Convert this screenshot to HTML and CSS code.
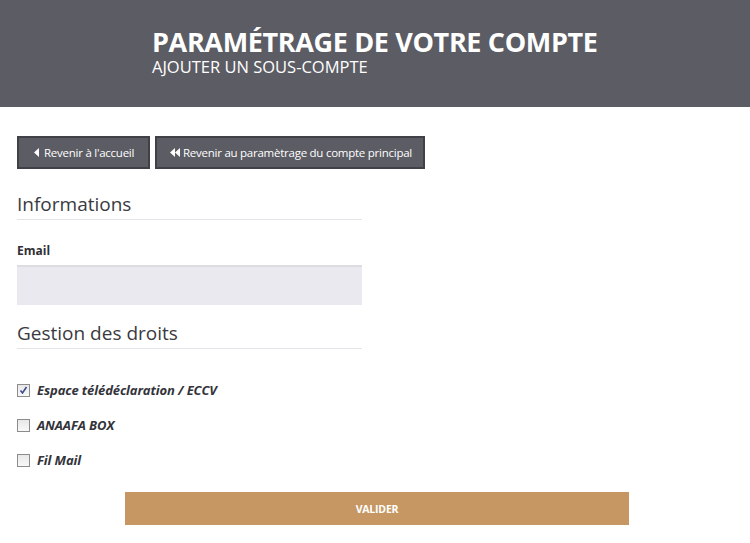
FILE: index.html
```html
<!DOCTYPE html>
<html lang="fr">
<head>
<meta charset="utf-8">
<link rel="stylesheet" href="styles.css">
</head>
<body>
<header class="hero">
  <div class="hero-inner">
    <h1 class="hero-title">PARAMÉTRAGE DE VOTRE COMPTE</h1>
    <p class="hero-sub">AJOUTER UN SOUS-COMPTE</p>
  </div>
</header>
<main class="content">
  <div class="actions">
    <a class="btn btn-home" href="#"><svg class="ico" width="5" height="9" viewBox="0 0 5 9"><path d="M5 0 L0 4.5 L5 9 Z" fill="#fff"/></svg>Revenir à l'accueil</a>
    <a class="btn btn-main" href="#"><svg class="ico" width="10" height="9" viewBox="0 0 10 9"><path d="M5 0 L0 4.5 L5 9 Z M10 0 L5 4.5 L10 9 Z" fill="#fff"/></svg>Revenir au paramètrage du compte principal</a>
  </div>
  <section class="block">
    <h2 class="section-title first">Informations</h2>
    <label class="field-label">Email</label>
    <div class="input"></div>
  </section>
  <section class="block">
    <h2 class="section-title second">Gestion des droits</h2>
    <ul class="rights">
      <li class="right"><span class="cb"><svg width="9" height="9" viewBox="0 0 9 9"><path d="M1.5 4.5 L3.5 7 L7.5 1" fill="none" stroke="#3d4b8e" stroke-width="1.6"/></svg></span>Espace télédéclaration / ECCV</li>
      <li class="right"><span class="cb"></span>ANAAFA BOX</li>
      <li class="right"><span class="cb"></span>Fil Mail</li>
    </ul>
  </section>
  <div class="submit-row">
    <button class="submit">VALIDER</button>
  </div>
</main>
</body>
</html>
```
FILE: styles.css
```css
* { box-sizing: border-box; }
body {
  margin: 0;
  font-family: "Open Sans", "Noto Sans", sans-serif;
  color: #333;
  background: #fff;
}
.hero {
  background: #5c5c64;
  height: 107px;
  padding: 27px 0 0 152px;
}
.hero-title {
  margin: 0;
  color: #fff;
  font-size: 27px;
  line-height: 30px;
  font-weight: 700;
  letter-spacing: -0.35px;
  white-space: nowrap;
}
.hero-sub {
  margin: 1px 0 0;
  color: #fff;
  font-size: 16.5px;
  line-height: 18px;
  white-space: nowrap;
}
.content {
  padding: 29px 17px 0;
}
.actions {
  display: flex;
  gap: 5px;
}
.btn {
  display: flex;
  align-items: center;
  gap: 5px;
  height: 33px;
  padding: 0 0 0 15px;
  background: #5c5c64;
  border: 2px solid #404047;
  color: #fff;
  text-decoration: none;
  font-size: 11.5px;
  letter-spacing: -0.25px;
  white-space: nowrap;
}
.btn-home { width: 133px; }
.btn-main { width: 270px; padding-left: 13px; gap: 3px; }
.ico { flex: none; }
.block {
  width: 345px;
}
.section-title {
  margin: 0;
  font-size: 19px;
  font-weight: 400;
  color: #3a3a40;
  line-height: 26px;
  padding-bottom: 2px;
  border-bottom: 1px solid #e4e4e8;
}
.section-title.first { margin-top: 22px; }
.section-title.second { margin-top: 15px; }
.field-label {
  display: block;
  margin-top: 23px;
  font-size: 12px;
  font-weight: 700;
  color: #2f2f35;
  line-height: 16px;
}
.input {
  margin-top: 6px;
  height: 40px;
  background: #e9e9ef;
  border-top: 2px solid #dcdce2;
}
.rights {
  list-style: none;
  margin: 32px 0 0;
  padding: 0;
  display: flex;
  flex-direction: column;
  gap: 17px;
}
.right {
  display: flex;
  align-items: center;
  gap: 7px;
  height: 18px;
  font-size: 13px;
  font-weight: 700;
  font-style: italic;
  color: #33333a;
  letter-spacing: -0.1px;
}
.cb {
  width: 13px;
  height: 13px;
  border: 1px solid #8c8c8c;
  background: linear-gradient(#e8e8e8, #f8f8f8);
  display: flex;
  align-items: center;
  justify-content: center;
  flex: none;
}
.submit-row {
  margin-top: 23px;
  padding-left: 108px;
}
.submit {
  width: 504px;
  height: 33px;
  border: 0;
  background: #c69762;
  color: #fff;
  font-family: "Open Sans", sans-serif;
  font-weight: 700;
  font-size: 10.5px;
  letter-spacing: -0.2px;
}
```
